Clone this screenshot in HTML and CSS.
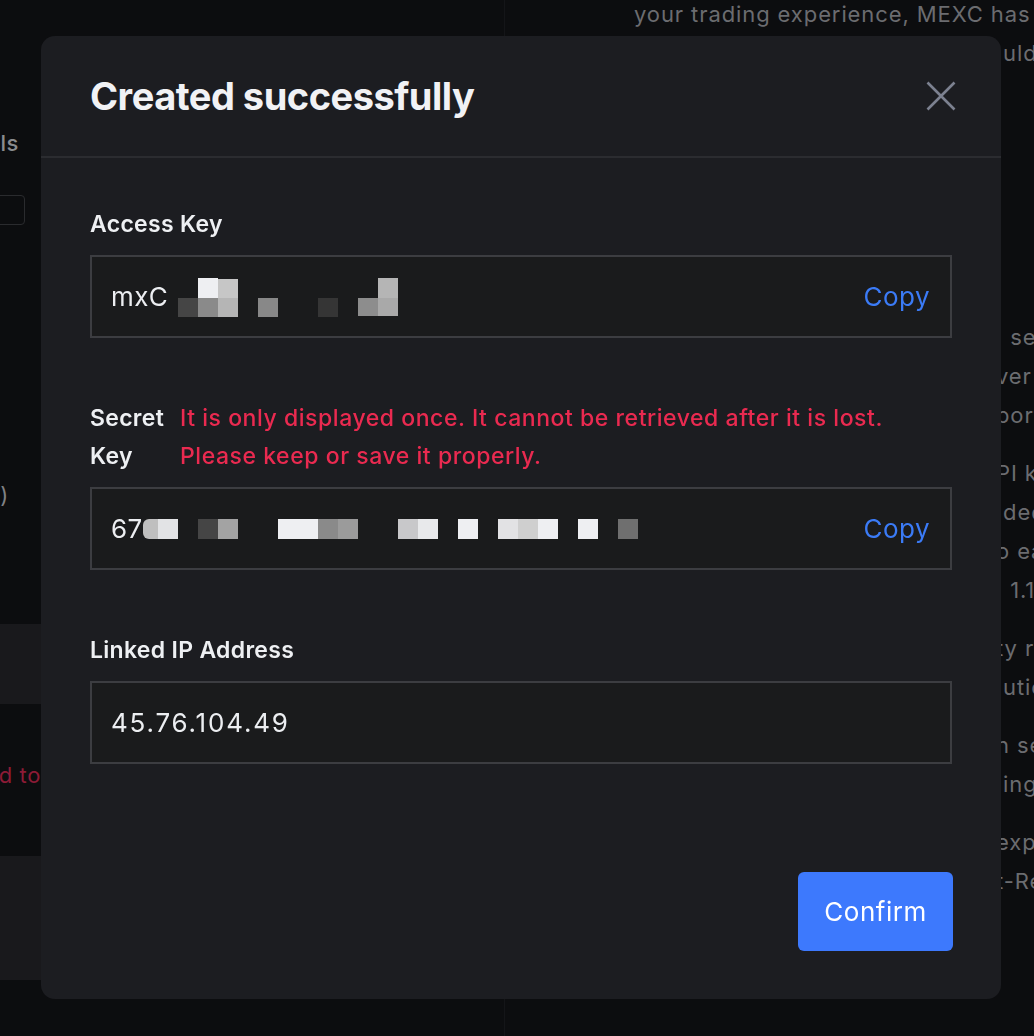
FILE: index.html
```html
<!DOCTYPE html>
<html lang="en">
<head>
<meta charset="utf-8">
<title>Created successfully</title>
<link rel="stylesheet" href="styles.css">
</head>
<body>
<div class="page">
  <section class="pane-left">
    <div class="tail tail-title"><span>API Key Details</span></div>
    <div class="tail tail-box"><span class="ghost-input"></span></div>
    <div class="tail tail-paren"><span>Notes (optional)</span></div>
    <div class="band band-a"></div>
    <div class="tail tail-warn"><span>Failed to</span></div>
    <div class="band band-b"></div>
  </section>
  <section class="pane-right">
    <p class="intro">your trading experience, MEXC has</p>
    <p class="frag first">&nbsp;uld</p>
    <div class="notes">
      <p class="frag">&nbsp;&nbsp;se</p>
      <p class="frag">ver r</p>
      <p class="frag">port</p>
    </div>
    <div class="notes">
      <p class="frag">PI k</p>
      <p class="frag">&nbsp;ded</p>
      <p class="frag">o ea</p>
      <p class="frag">&nbsp;&nbsp;1.1</p>
    </div>
    <div class="notes">
      <p class="frag">ty r</p>
      <p class="frag">&nbsp;utio</p>
    </div>
    <div class="notes">
      <p class="frag">n se</p>
      <p class="frag">&nbsp;ing</p>
    </div>
    <div class="notes">
      <p class="frag">expi</p>
      <p class="frag">t-Re</p>
    </div>
  </section>
</div>

<div class="modal" role="dialog" aria-labelledby="modal-title">
  <header class="modal-head">
    <h2 id="modal-title" class="modal-title">Created successfully</h2>
    <button class="close" aria-label="Close">
      <svg width="30" height="30" viewBox="0 0 30 30" aria-hidden="true">
        <path d="M1.5 1.5 L28.5 28.5 M28.5 1.5 L1.5 28.5" stroke="#7c8190" stroke-width="2.6" fill="none"/>
      </svg>
    </button>
  </header>

  <div class="modal-body">
    <div class="field">
      <div class="field-label">Access Key</div>
      <div class="field-box">
        <span class="value"><span class="prefix prefix-access">mxC</span><svg class="mosaic" width="240" height="40" viewBox="0 0 240 40" aria-hidden="true">
          <rect x="8" y="21" width="20" height="20" fill="#454545"/>
          <rect x="28" y="1" width="20" height="20" fill="#eeeff2"/>
          <rect x="28" y="21" width="20" height="20" fill="#8a8a8a"/>
          <rect x="48" y="2" width="20" height="19" fill="#c6c6c6"/>
          <rect x="48" y="21" width="20" height="19" fill="#b5b5b5"/>
          <rect x="88" y="21" width="20" height="19" fill="#888888"/>
          <rect x="148" y="21" width="20" height="19" fill="#353535"/>
          <rect x="188" y="21" width="20" height="18" fill="#8d8d8d"/>
          <rect x="208" y="1" width="20" height="20" fill="#b5b5b5"/>
          <rect x="208" y="21" width="20" height="18" fill="#a9a9a9"/>
        </svg></span>
        <button class="copy">Copy</button>
      </div>
    </div>

    <div class="field">
      <div class="field-label split">
        <span class="label-name">Secret Key</span>
        <span class="warn">It is only displayed once. It cannot be retrieved after it is lost.<br>Please keep or save it properly.</span>
      </div>
      <div class="field-box">
        <span class="value"><span class="prefix prefix-secret">67</span><svg class="mosaic" width="500" height="40" viewBox="0 0 500 40" aria-hidden="true">
          <rect x="1" y="10" width="17" height="20" rx="6" fill="#bfbfbf"/>
          <rect x="12" y="10" width="6" height="20" fill="#bfbfbf"/>
          <rect x="16" y="10" width="20" height="20" fill="#e2e3e5"/>
          <rect x="56" y="10" width="20" height="20" fill="#454545"/>
          <rect x="76" y="10" width="20" height="20" fill="#a3a3a3"/>
          <rect x="136" y="10" width="40" height="20" fill="#eeeff2"/>
          <rect x="176" y="10" width="20" height="20" fill="#8a8a8a"/>
          <rect x="196" y="10" width="20" height="20" fill="#9b9b9b"/>
          <rect x="256" y="10" width="20" height="20" fill="#c8c8ca"/>
          <rect x="276" y="10" width="20" height="20" fill="#e8e9eb"/>
          <rect x="316" y="10" width="20" height="20" fill="#eeeff2"/>
          <rect x="356" y="10" width="20" height="20" fill="#e2e2e4"/>
          <rect x="376" y="10" width="20" height="20" fill="#cfcfcf"/>
          <rect x="396" y="10" width="20" height="20" fill="#eeeff2"/>
          <rect x="436" y="10" width="20" height="20" fill="#eeeff2"/>
          <rect x="476" y="10" width="20" height="20" fill="#6f6f6f"/>
        </svg></span>
        <button class="copy">Copy</button>
      </div>
    </div>

    <div class="field">
      <div class="field-label">Linked IP Address</div>
      <div class="field-box">
        <span class="value ip">45.76.104.49</span>
      </div>
    </div>
  </div>

  <footer class="modal-foot">
    <button class="confirm">Confirm</button>
  </footer>
</div>
</body>
</html>
```

FILE: styles.css
```css
html, body {
  margin: 0;
  padding: 0;
}

body {
  width: 1034px;
  height: 1036px;
  overflow: hidden;
  background: #0c0d0f;
  font-family: Inter, "Noto Sans", "Liberation Sans", sans-serif;
}

p { margin: 0; }

/* ---------- background page ---------- */
.page {
  display: grid;
  grid-template-columns: 505px 1fr;
  height: 1036px;
}

.pane-left {
  display: flex;
  flex-direction: column;
  padding-top: 128px;
  border-right: 1px solid #141518;
  font-size: 22px;
  line-height: 30px;
  letter-spacing: 0.6px;
  color: #8a8b8e;
}

.tail {
  display: flex;
  justify-content: flex-end;
  white-space: nowrap;
}

.tail-title { width: 19px; font-weight: 500; }

.tail-box { width: 25px; margin-top: 37px; }

.ghost-input {
  display: block;
  flex: 0 0 auto;
  width: 360px;
  height: 30px;
  box-sizing: border-box;
  border: 1px solid #2a2b2e;
  border-radius: 4px;
}

.tail-paren { width: 9px; margin-top: 255px; color: #808184; }

.band {
  background: #19191c;
  width: 100%;
}

.band-a { margin-top: 114px; height: 80px; }

.tail-warn { width: 41px; margin-top: 56px; color: #8d1b36; }

.band-b { margin-top: 66px; height: 124px; }

.pane-right {
  padding-left: 129px;
  font-size: 22px;
  letter-spacing: 0.9px;
  color: #6b6c70;
  overflow: hidden;
}

.intro {
  line-height: 28px;
  white-space: nowrap;
}

.frag {
  line-height: 39px;
  white-space: nowrap;
  padding-left: 362px;
}

.frag.first { margin-top: 6px; }

.notes { margin-top: 19px; }
.pane-right .notes:nth-of-type(1) { margin-top: 245px; }

/* ---------- modal ---------- */
.modal {
  position: fixed;
  left: 41px;
  top: 36px;
  width: 960px;
  height: 963px;
  box-sizing: border-box;
  background: #1c1d21;
  border-radius: 14px;
  display: flex;
  flex-direction: column;
  color: #eef0f3;
}

.modal-head {
  height: 122px;
  box-sizing: border-box;
  border-bottom: 2px solid #2b2c30;
  display: flex;
  align-items: center;
  justify-content: space-between;
  padding: 0 45px 0 49px;
}

.modal-title {
  margin: 0;
  font-size: 38px;
  font-weight: 700;
  letter-spacing: -0.5px;
  color: #f1f2f5;
}

.close {
  display: flex;
  padding: 0;
  border: 0;
  background: none;
  cursor: pointer;
}

.modal-body {
  padding: 47px 49px 0;
  display: flex;
  flex-direction: column;
  gap: 61px;
}

.field-label {
  font-size: 23px;
  font-weight: 600;
  line-height: 38px;
  letter-spacing: 0.3px;
  margin-bottom: 12px;
  color: #eef0f3;
}

.field-label.split {
  display: flex;
}

.label-name {
  width: 76px;
  margin-right: 14px;
  flex: 0 0 auto;
}

.warn {
  font-weight: 500;
  letter-spacing: 0.55px;
  color: #ea2a50;
}

.field-box {
  height: 83px;
  box-sizing: border-box;
  border: 2px solid #3c3d41;
  background: #1a1b1c;
  display: flex;
  align-items: center;
  justify-content: space-between;
  padding: 0 20px 0 19px;
}

.value {
  display: flex;
  align-items: center;
  font-size: 26px;
  letter-spacing: 0.4px;
  color: #eceef1;
  white-space: nowrap;
}

.value.ip { letter-spacing: 1.8px; }

.prefix { flex: 0 0 auto; }
.prefix-access { width: 59px; }
.prefix-secret { width: 31px; }

.mosaic { display: block; flex: 0 0 auto; }

.copy {
  border: 0;
  background: none;
  padding: 0;
  font-family: inherit;
  font-size: 26px;
  letter-spacing: 0.5px;
  color: #3b7bf6;
  cursor: pointer;
}

.modal-foot {
  margin-top: auto;
  padding: 0 48px 48px;
  display: flex;
  justify-content: flex-end;
}

.confirm {
  width: 155px;
  height: 79px;
  border: 0;
  border-radius: 6px;
  background: #3d79fd;
  color: #ffffff;
  font-family: inherit;
  font-size: 26px;
  letter-spacing: 0.5px;
  cursor: pointer;
}
```
